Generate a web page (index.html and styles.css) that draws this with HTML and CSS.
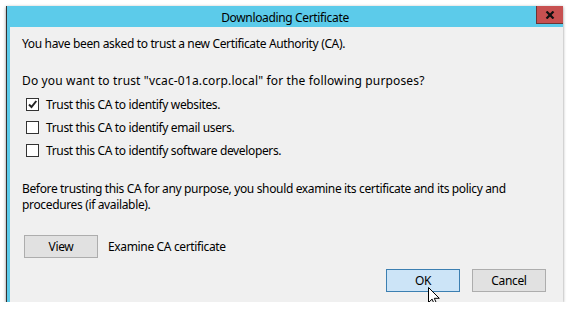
FILE: index.html
```html
<!DOCTYPE html>
<html>
  <head>
    <title>Downloading Certificate</title>
    <link rel="stylesheet" href="styles.css">
  </head>
  <body>
    <div class="window">
      <div class="titlebar">
        <span class="title">Downloading Certificate</span>
        <!-- Close button with bold x -->
        <button class="close" aria-label="Close">
          <svg viewBox="0 0 10 8" width="10" height="8">
            <path d="M1.5 0.5l7 7M8.5 0.5l-7 7" stroke="#111" stroke-width="2.2" />
          </svg>
        </button>
      </div>
      <div class="content">
        <p class="line intro">You have been asked to trust a new Certificate Authority (CA).</p>
        <p class="line question">Do you want to trust "vcac-01a.corp.local" for the following purposes?</p>
        <ul class="purposes">
          <li class="purpose">
            <span class="checkbox checked">
              <svg viewBox="0 0 11 11" width="11" height="11">
                <path d="M2 5.5l2.5 2.5 4.8-6" fill="none" stroke="#222" stroke-width="2" />
              </svg>
            </span>
            Trust this CA to identify websites.
          </li>
          <li class="purpose">
            <span class="checkbox"></span>
            Trust this CA to identify email users.
          </li>
          <li class="purpose">
            <span class="checkbox"></span>
            Trust this CA to identify software developers.
          </li>
        </ul>
        <p class="line note">
          Before trusting this CA for any purpose, you should examine its certificate and its policy and<br>
          procedures (if available).
        </p>
        <div class="view-row">
          <button class="btn">View</button>
          <span>Examine CA certificate</span>
        </div>
        <div class="actions">
          <button class="btn ok">OK</button>
          <button class="btn">Cancel</button>
        </div>
      </div>
      <!-- Mouse pointer resting on the OK button -->
      <svg class="cursor" viewBox="0 0 12 19" width="12" height="19">
        <path d="M0.5 0.5v15l3.6-3.4 2.4 5.6 2.2-1-2.4-5.4h5z" fill="#fff" stroke="#000" stroke-width="1" stroke-linejoin="round" />
      </svg>
    </div>
  </body>
</html>
```

FILE: styles.css
```css
:root {
  --frame: #5ccbea;
  --surface: #f0f0f0;
  --btn: #e1e1e1;
  --btn-border: #adadad;
  --text: #000;
}

html,
body {
  margin: 0;
  padding: 0;
  background: #fff;
  font-family: "Noto Sans", "Open Sans", Arial, sans-serif;
  font-size: 12px;
  letter-spacing: -0.35px;
  color: var(--text);
}

body {
  padding: 6px 6px 0 6px;
}

.window {
  position: relative;
  width: 556px;
  height: 296px;
  background: var(--frame);
  border-left: 1px solid #333;
  box-shadow: 0 1px 3px rgba(0, 0, 0, 0.45);
  display: flex;
  flex-direction: column;
}

.titlebar {
  height: 21px;
  display: flex;
  align-items: center;
  justify-content: center;
  position: relative;
}

.title {
  line-height: 21px;
  padding-top: 1px;
}

.close {
  position: absolute;
  top: 0;
  right: 0;
  width: 27px;
  height: 18px;
  padding: 0;
  margin: 0;
  background: #c75050;
  border: none;
  border-left: 1px solid #6b3535;
  border-bottom: 1px solid #6b3535;
  display: flex;
  align-items: center;
  justify-content: center;
}

.content {
  flex: 1;
  margin-left: 3px;
  background: var(--surface);
  padding: 9px 17px 0 12px;
  display: flex;
  flex-direction: column;
}

.line {
  margin: 0;
  line-height: 16px;
}

.question {
  margin-top: 21px;
  letter-spacing: 0.15px;
}

.purposes {
  list-style: none;
  margin: 4px 0 0 0;
  padding: 0;
}

.purpose {
  height: 23px;
  display: flex;
  align-items: center;
  gap: 7px;
  padding-left: 4px;
}

.checkbox {
  width: 11px;
  height: 11px;
  border: 1px solid #333;
  background: #fff;
  display: flex;
}

.note {
  margin-top: 19px;
}

.view-row {
  margin-top: 22px;
  display: flex;
  align-items: center;
  gap: 10px;
  padding-left: 2px;
}

.btn {
  width: 74px;
  height: 23px;
  padding: 0;
  font-family: inherit;
  font-size: 12px;
  letter-spacing: inherit;
  color: var(--text);
  background: var(--btn);
  border: 1px solid var(--btn-border);
}

.actions {
  margin-top: 11px;
  display: flex;
  justify-content: flex-end;
  gap: 12px;
}

.btn.ok {
  background: #cce4f7;
  border-color: #3c7fb1;
}

.cursor {
  position: absolute;
  left: 421px;
  top: 281px;
}
```
